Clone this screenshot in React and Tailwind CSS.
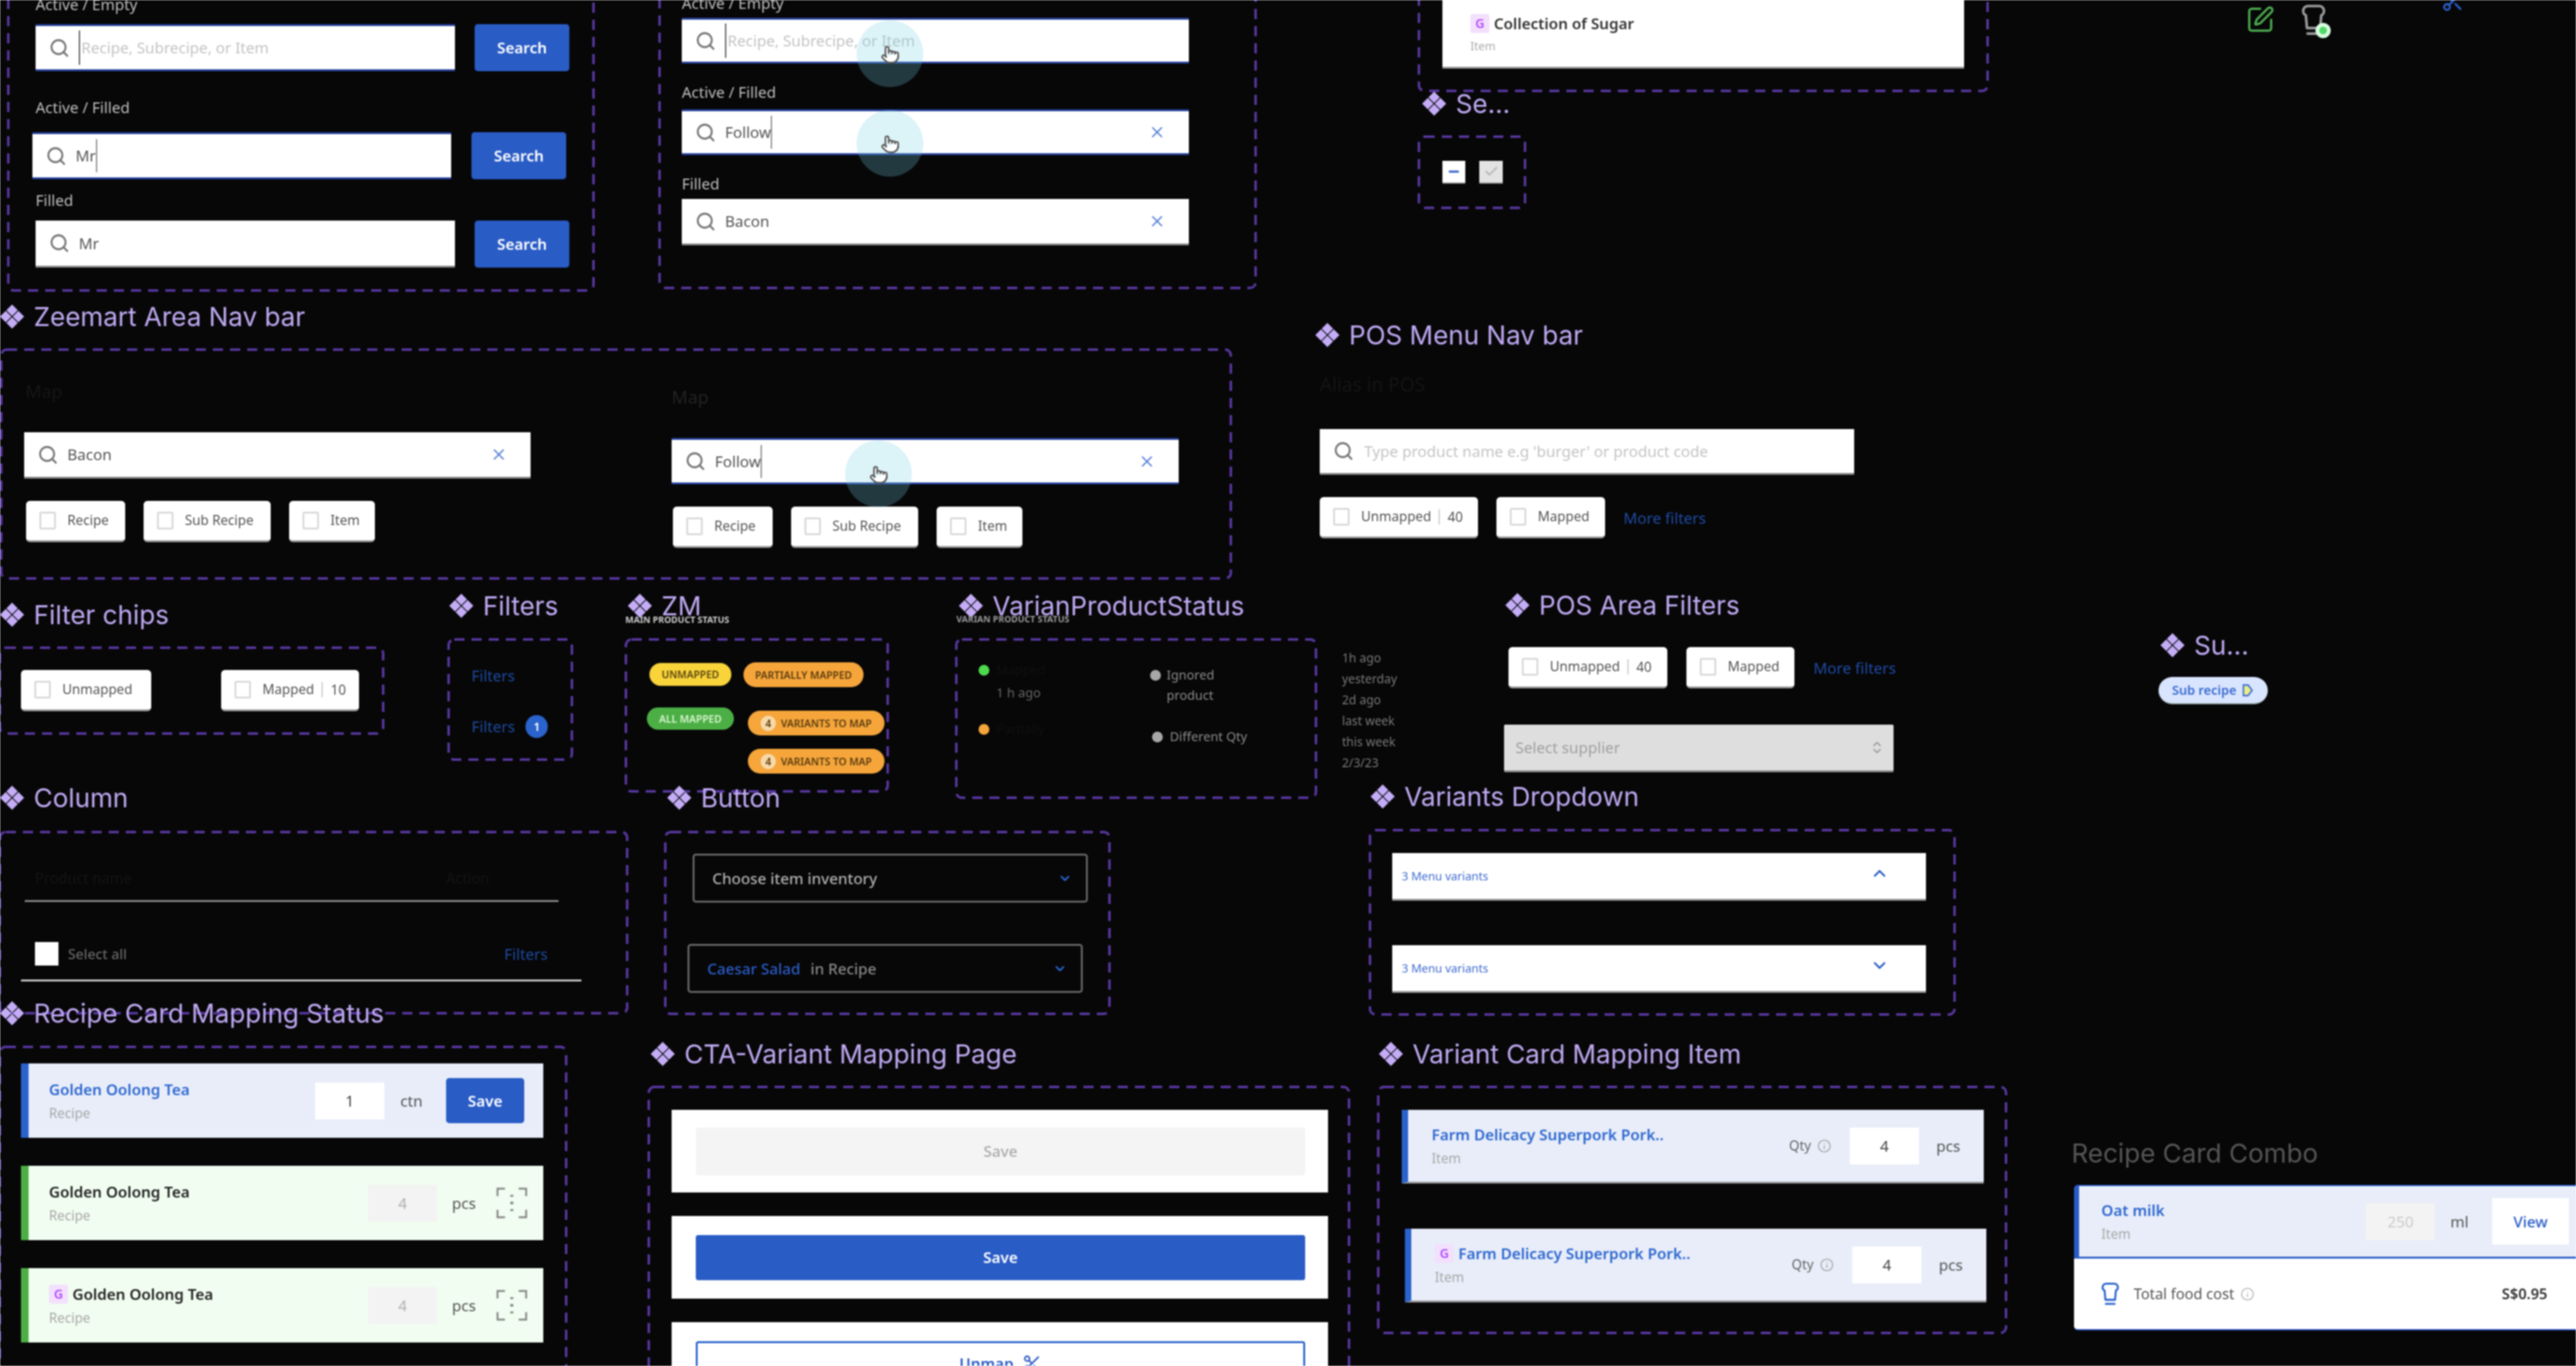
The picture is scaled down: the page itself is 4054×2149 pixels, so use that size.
import { Search, X, ChevronUp, ChevronDown, ChevronsUpDown, Info, Scissors, Pointer, SquarePen, Check, Minus } from 'lucide-react'

function Diamond() {
  return (
    <svg viewBox="0 0 40 40" className="w-[40px] h-[40px] shrink-0 fill-[#c4adf6]">
      <path d="M20 1l9 9-9 9-9-9zM10 11l9 9-9 9-9-9zM30 11l9 9-9 9-9-9zM20 21l9 9-9 9-9-9z" />
    </svg>
  )
}

function Heading({ className, children }) {
  return (
    <div className={`absolute flex items-center gap-[14px] h-[40px] text-[41px] leading-[40px] text-[#bfa9f2] font-['Inter',sans-serif] whitespace-nowrap ${className}`}>
      <Diamond />
      <span>{children}</span>
    </div>
  )
}

// dashed component-set outline, same dash rhythm as the canvas tool draws it
function Frame({ className, children }) {
  return (
    <div className={`absolute ${className}`}>
      <svg className="absolute inset-0 w-full h-full overflow-visible pointer-events-none">
        <rect width="100%" height="100%" rx="9" fill="none" stroke="#56369c" strokeWidth="4" strokeDasharray="16 11" />
      </svg>
      {children}
    </div>
  )
}

function Hat({ className }) {
  return (
    <svg viewBox="0 0 24 30" className={`fill-none stroke-current ${className}`} strokeWidth="2.4" strokeLinejoin="round" strokeLinecap="round">
      <path d="M7 2h10a4.5 4.5 0 0 1 2 8.5L18 22H6L5 10.5A4.5 4.5 0 0 1 7 2zM6.5 27h11" />
    </svg>
  )
}

function Label({ className = '', children }) {
  return <div className={`h-[30px] leading-[30px] text-[24px] text-[#bdbdbd] ${className}`}>{children}</div>
}

function SearchBox({ className = '', active, value, placeholder, caret, clear }) {
  return (
    <div className={`flex items-center bg-white pl-[21px] ${active ? 'border-y-[3px] border-[#28429f]' : 'border-b-[3px] border-[#8a8a8a]'} ${className}`}>
      <Search className="w-[33px] h-[33px] text-[#777] shrink-0" strokeWidth={2.2} />
      {caret && !value && <div className="w-[2px] h-[54px] ml-[14px] mr-[2px] bg-[#555]" />}
      {placeholder && <span className={`text-[24px] text-[#c4c4c4] whitespace-nowrap ${caret ? '' : 'ml-[16px]'}`}>{placeholder}</span>}
      {value && <span className="text-[24px] text-[#555] ml-[14px] whitespace-nowrap">{value}</span>}
      {caret && value && <div className="w-[2px] h-[52px] bg-[#888]" />}
      {clear && <X className="ml-auto mr-[36px] w-[28px] h-[28px] text-[#5b83d8] shrink-0" strokeWidth={2} />}
    </div>
  )
}

function SearchBtn({ className = '' }) {
  return <div className={`flex items-center justify-center w-[149px] h-[74px] rounded-[5px] bg-[#2a5cc6] text-white text-[24px] font-semibold ${className}`}>Search</div>
}

function Cursor({ className }) {
  return (
    <div className={`absolute flex justify-center w-[105px] h-[105px] rounded-full bg-[#74d0e4]/25 ${className}`}>
      <Pointer className="mt-[38px] w-[30px] h-[32px] text-[#555] fill-white" strokeWidth={2} />
    </div>
  )
}

function Chip({ className = '', label, count }) {
  return (
    <div className={`flex items-center pl-[21px] h-[65px] bg-white rounded-[6px] border-b-[3px] border-[#999] text-[21px] text-[#555] whitespace-nowrap ${className}`}>
      <div className="w-[26px] h-[28px] mr-[18px] border-[3px] border-[#dadada] rounded-[3px] shrink-0" />
      <span>{label}</span>
      {count && <span className="ml-[12px] pl-[12px] border-l-2 border-[#ccc] leading-[24px]">{count}</span>}
    </div>
  )
}

function G() {
  return <div className="flex items-center justify-center w-[30px] h-[30px] shrink-0 rounded-[4px] bg-[#f3e0fd] text-[#b44dff] text-[20px] font-semibold">G</div>
}

function StatusPill({ className, children }) {
  return <div className={`flex items-center justify-center rounded-full text-[16px] font-semibold whitespace-nowrap ${className}`}>{children}</div>
}

function VariantsPill({ className = '' }) {
  return (
    <StatusPill className={`w-[215px] h-[39px] bg-[#f5a53a] text-[#5b3d10] ${className}`}>
      <span className="flex items-center justify-center w-[24px] h-[24px] mr-[8px] rounded-full bg-[#f7d9a8] text-[16px]">4</span>
      VARIANTS TO MAP
    </StatusPill>
  )
}

function Dot({ className }) {
  return <div className={`w-[17px] h-[17px] rounded-full shrink-0 ${className}`} />
}

function ScanIcon() {
  return (
    <svg viewBox="0 0 50 50" className="w-[49px] h-[49px] fill-none stroke-[#888]" strokeWidth="3">
      <path d="M2 14V2h12M36 2h12v12M48 36v12H36M14 48H2V36" />
      <path d="M25 12v3M25 23v4M25 35v3" strokeWidth="5" />
    </svg>
  )
}

function Title({ color, g, children }) {
  return (
    <div className="flex items-center gap-[7px] h-[30px]">
      {g && <G />}
      <span className={`text-[24px] font-semibold whitespace-nowrap ${color}`}>{children}</span>
    </div>
  )
}

function Sub({ children }) {
  return <div className="mt-[8px] h-[28px] leading-[28px] text-[21px] text-[#a8a8a8]">{children}</div>
}

function RecipeCard({ tone, title, g, children }) {
  const blue = tone === 'blue'
  return (
    <div className={`flex items-center w-[822px] h-[117px] pl-[32px] border-l-[12px] ${blue ? 'bg-[#e8edf9] border-[#2a63cc]' : 'bg-[#f1fdf0] border-[#4caf45]'}`}>
      <div className="mr-auto">
        <Title g={g} color={blue ? 'text-[#2f68d0]' : 'text-[#222]'}>{title}</Title>
        <Sub>Recipe</Sub>
      </div>
      {children}
    </div>
  )
}

function QtyBox({ value, muted, className = '' }) {
  return (
    <div className={`flex items-center justify-center w-[109px] h-[58px] text-[24px] ${muted ? 'bg-[#f3f3f3] text-[#b0b0b0]' : 'bg-white text-[#444]'} ${className}`}>{value}</div>
  )
}

function MappedRight() {
  return (
    <div className="flex items-center pr-[25px]">
      <QtyBox value="4" muted />
      <span className="ml-[23px] mr-[32px] text-[24px] text-[#555]">pcs</span>
      <ScanIcon />
    </div>
  )
}

function VariantCard({ className, g }) {
  return (
    <div className={`flex items-center h-[116px] pl-[37px] pr-[37px] bg-[#e8edf9] border-l-[10px] border-[#2a63cc] border-b-[3px] border-b-[#999] ${className}`}>
      <div className="mr-auto">
        <Title g={g} color="text-[#2f68d0]">Farm Delicacy Superpork Pork..</Title>
        <Sub>Item</Sub>
      </div>
      <span className="text-[21px] text-[#666]">Qty</span>
      <Info className="ml-[10px] mr-[29px] w-[22px] h-[22px] text-[#aaa]" />
      <QtyBox value="4" />
      <span className="ml-[27px] text-[24px] text-[#555]">pcs</span>
    </div>
  )
}

function MenuVariants({ className = '', up }) {
  const Icon = up ? ChevronUp : ChevronDown
  return (
    <div className={`flex items-center justify-between w-[840px] h-[75px] pl-[15px] pr-[58px] bg-white border-b-[3px] border-[#999] text-[18px] text-[#3f6bd0] ${className}`}>
      <span>3 Menu variants</span>
      <Icon className="w-[30px] h-[30px] text-[#2f5fc8] mb-[8px]" strokeWidth={2.5} />
    </div>
  )
}

function SelectBox({ className, children }) {
  return (
    <div className={`flex items-center w-[622px] h-[77px] pl-[28px] pr-[22px] border-[3px] border-[#666] rounded-[5px] text-[24px] font-medium ${className}`}>
      {children}
      <ChevronDown className="ml-auto w-[22px] h-[22px] text-[#2563cc]" strokeWidth={3} />
    </div>
  )
}

function CtaCard({ children }) {
  return <div className="flex items-center justify-center w-[1033px] h-[130px] pl-[38px] pr-[36px] bg-white shrink-0">{children}</div>
}

export default function App() {
  return (
    <div className="relative w-[4054px] h-[2149px] overflow-hidden bg-[#070708] blur-[1px] font-['Noto_Sans',sans-serif]">
      {/* top row, search states */}
      <Frame className="left-[13px] top-[-60px] w-[921px] h-[517px] pl-[43px] pt-[52px]">
        <Label>Active / Empty</Label>
        <div className="flex gap-[31px] mt-[16px]">
          <SearchBox active caret placeholder="Recipe, Subrecipe, or Item" className="w-[660px] h-[74px]" />
          <SearchBtn />
        </div>
        <Label className="mt-[42px]">Active / Filled</Label>
        <div className="flex gap-[32px] mt-[24px] ml-[-5px]">
          <SearchBox active caret value="Mr" className="w-[659px] h-[74px]" />
          <SearchBtn />
        </div>
        <Label className="mt-[18px]">Filled</Label>
        <div className="flex gap-[31px] mt-[17px]">
          <SearchBox value="Mr" className="w-[660px] h-[74px]" />
          <SearchBtn />
        </div>
      </Frame>

      <Frame className="left-[1038px] top-[-60px] w-[938px] h-[513px] pl-[35px] pt-[50px]">
        <Label>Active / Empty</Label>
        <SearchBox active caret placeholder="Recipe, Subrecipe, or Item" className="w-[798px] h-[72px] mt-[8px]" />
        <Label className="mt-[30px]">Active / Filled</Label>
        <SearchBox active caret clear value="Follow" className="w-[798px] h-[72px] mt-[12px]" />
        <Label className="mt-[30px]">Filled</Label>
        <SearchBox clear value="Bacon" className="w-[798px] h-[73px] mt-[9px]" />
        <Cursor className="left-[310px] top-[92px]" />
        <Cursor className="left-[310px] top-[233px]" />
      </Frame>

      <Frame className="left-[2233px] top-[-60px] w-[895px] h-[203px] pl-[37px] pt-[50px]">
        <div className="w-[821px] h-[118px] pl-[44px] pt-[32px] bg-white border-b-[3px] border-[#999]">
          <Title g color="text-[#333]">Collection of Sugar</Title>
          <div className="mt-[8px] text-[18px] leading-[24px] text-[#aaa]">Item</div>
        </div>
      </Frame>
      <Heading className="left-[2237px] top-[143px]">Se...</Heading>
      <Frame className="left-[2233px] top-[215px] w-[167px] h-[112px] flex items-center gap-[22px] pl-[37px]">
        <div className="flex items-center justify-center w-[36px] h-[36px] bg-white border-b-2 border-[#999]">
          <Minus className="w-[22px] h-[22px] text-[#3f6bd0]" strokeWidth={4} />
        </div>
        <div className="flex items-center justify-center w-[37px] h-[36px] bg-[#e3e3e3] border-b-2 border-[#999]">
          <Check className="w-[24px] h-[24px] text-[#bbb]" strokeWidth={3} />
        </div>
      </Frame>

      {/* loose icons up in the corner */}
      <SquarePen className="absolute left-[3534px] top-[8px] w-[46px] h-[46px] text-[#4caf50]" strokeWidth={1.8} />
      <div className="absolute left-[3620px] top-[6px] w-[50px] h-[54px]">
        <Hat className="w-[42px] h-[52px] text-[#999]" />
        <div className="absolute right-[2px] bottom-[0px] w-[24px] h-[24px] rounded-full bg-[#4dd964] border-[6px] border-[#d8fbe0]" />
      </div>
      <Scissors className="absolute left-[3842px] top-[-16px] w-[36px] h-[36px] text-[#2a5cc6]" strokeWidth={2.2} />

      {/* Zeemart nav */}
      <Heading className="left-[-1px] top-[478px]">Zeemart Area Nav bar</Heading>
      <Frame className="left-[2px] top-[550px] w-[1935px] h-[360px] flex pl-[36px]">
        <div className="w-[1019px] pt-[50px]">
          <div className="h-[30px] leading-[30px] text-[28px] text-[#161616] ml-[2px]">Map</div>
          <SearchBox clear value="Bacon" className="w-[797px] h-[73px] mt-[50px]" />
          <div className="flex gap-[29px] mt-[35px] ml-[3px]">
            <Chip label="Recipe" className="w-[156px]" />
            <Chip label="Sub Recipe" className="w-[200px]" />
            <Chip label="Item" className="w-[135px]" />
          </div>
        </div>
        <div className="w-[816px] pt-[59px]">
          <div className="h-[30px] leading-[30px] text-[28px] text-[#222]">Map</div>
          <SearchBox active caret clear value="Follow" className="w-[798px] h-[73px] mt-[50px]" />
          <div className="flex gap-[29px] mt-[35px] ml-[2px]">
            <Chip label="Recipe" className="w-[157px]" />
            <Chip label="Sub Recipe" className="w-[200px]" />
            <Chip label="Item" className="w-[135px]" />
          </div>
        </div>
        <Cursor className="left-[1328px] top-[143px]" />
      </Frame>

      {/* POS nav, no frame around this one */}
      <Heading className="left-[2069px] top-[507px]">POS Menu Nav bar</Heading>
      <div className="absolute left-[2077px] top-[590px] w-[841px]">
        <div className="h-[30px] leading-[30px] text-[30px] text-[#141414]">Alias in POS</div>
        <SearchBox placeholder="Type product name e.g 'burger' or product code" className="w-[841px] h-[72px] mt-[55px]" />
        <div className="flex items-center gap-[29px] mt-[35px]">
          <Chip label="Unmapped" count="40" className="w-[249px]" />
          <Chip label="Mapped" className="w-[171px]" />
          <span className="text-[24px] text-[#1e4aa3]">More filters</span>
        </div>
      </div>

      {/* filter row */}
      <Heading className="left-[-1px] top-[947px]">Filter chips</Heading>
      <Frame className="left-[0px] top-[1019px] w-[603px] h-[135px] flex items-center gap-[110px] pl-[33px]">
        <Chip label="Unmapped" className="w-[205px]" />
        <Chip label="Mapped" count="10" className="w-[217px]" />
      </Frame>

      <Heading className="left-[706px] top-[933px]">Filters</Heading>
      <Frame className="left-[706px] top-[1006px] w-[194px] h-[189px] pl-[36px] pt-[42px] text-[24px] leading-[30px] text-[#1c4a9e]">
        <div>Filters</div>
        <div className="flex items-center gap-[17px] mt-[47px]">
          Filters
          <span className="flex items-center justify-center w-[35px] h-[36px] rounded-full bg-[#2a63cc] text-white text-[18px] font-semibold">1</span>
        </div>
      </Frame>

      <Heading className="left-[987px] top-[933px]">ZM</Heading>
      <div className="absolute left-[984px] top-[966px] text-[14px] leading-[18px] font-bold text-[#ccc] whitespace-nowrap">MAIN PRODUCT STATUS</div>
      <Frame className="left-[985px] top-[1006px] w-[412px] h-[239px] flex gap-[15px] pl-[33px]">
        <div className="flex flex-col items-center w-[137px] pt-[37px]">
          <StatusPill className="w-[129px] h-[36px] bg-[#f8d33a] text-[#5a4710]">UNMAPPED</StatusPill>
          <StatusPill className="w-[137px] h-[35px] mt-[34px] bg-[#4caf45] text-[#d9f5d2]">ALL MAPPED</StatusPill>
        </div>
        <div className="pt-[36px]">
          <StatusPill className="w-[189px] h-[39px] bg-[#f5a53a] text-[#5b3d10]">PARTIALLY MAPPED</StatusPill>
          <VariantsPill className="mt-[37px] ml-[7px]" />
          <VariantsPill className="mt-[21px] ml-[7px]" />
        </div>
      </Frame>

      <Heading className="left-[1508px] top-[933px]">VarianProductStatus</Heading>
      <div className="absolute left-[1505px] top-[965px] text-[14px] leading-[18px] font-bold text-[#999] whitespace-nowrap">VARIAN PRODUCT STATUS</div>
      <Frame className="left-[1505px] top-[1006px] w-[566px] h-[249px] flex pl-[35px] text-[20px] leading-[24px]">
        <div className="w-[270px] pt-[36px]">
          <div className="flex items-center gap-[11px] text-[#101010]"><Dot className="bg-[#4ddb4d]" />Mapped</div>
          <div className="mt-[12px] ml-[28px] text-[#666]">1 h ago</div>
          <div className="flex items-center gap-[11px] mt-[33px] text-[#101010]"><Dot className="bg-[#f5a53a]" />Partially</div>
        </div>
        <div className="pt-[40px] text-[#8a8a8a] leading-[32px]">
          <div className="flex items-start gap-[9px]">
            <Dot className="bg-[#a8a8a8] mt-[8px]" />
            <span>Ignored<br />product</span>
          </div>
          <div className="flex items-center gap-[11px] mt-[33px] ml-[3px]"><Dot className="bg-[#a8a8a8]" />Different Qty</div>
        </div>
      </Frame>

      <div className="absolute left-[2112px] top-[1019px] text-[19px] leading-[33px] text-[#777]">
        <div>1h ago</div>
        <div>yesterday</div>
        <div>2d ago</div>
        <div>last week</div>
        <div>this week</div>
        <div>2/3/23</div>
      </div>

      <Heading className="left-[2368px] top-[932px]">POS Area Filters</Heading>
      <div className="absolute left-[2367px] top-[1018px] w-[640px]">
        <div className="flex items-center gap-[30px] ml-[7px]">
          <Chip label="Unmapped" count="40" className="w-[250px]" />
          <Chip label="Mapped" className="w-[170px]" />
          <span className="text-[24px] text-[#1e4aa3] whitespace-nowrap">More filters</span>
        </div>
        <div className="flex items-center justify-between w-[613px] h-[75px] mt-[57px] pl-[18px] pr-[14px] bg-[#dedede] border-b-[3px] border-[#888] rounded-[2px] text-[24px] text-[#a0a0a0]">
          Select supplier
          <ChevronsUpDown className="w-[24px] h-[24px] text-[#999]" strokeWidth={2} />
        </div>
      </div>

      <Heading className="left-[3399px] top-[995px]">Su...</Heading>
      <div className="absolute left-[3397px] top-[1065px] flex items-center justify-center gap-[6px] w-[172px] h-[43px] rounded-full bg-[#d9e5ff] border-b-2 border-[#9aa] text-[20px] font-semibold text-[#3b6bd0]">
        Sub recipe
        <svg viewBox="0 0 24 24" className="w-[22px] h-[22px] fill-[#e8ec8c] stroke-[#3b6bd0]" strokeWidth="2.5">
          <path d="M5 3h8l7 9-7 9H5z" />
        </svg>
      </div>

      {/* third row */}
      <Heading className="left-[-1px] top-[1235px]">Column</Heading>
      <Frame className="left-[0px] top-[1309px] w-[987px] h-[285px] pl-[39px] pt-[57px]">
        <div className="flex justify-between w-[715px] ml-[16px] h-[30px] leading-[30px] text-[23px] text-[#141414]">
          <span>Product name</span>
          <span>Action</span>
        </div>
        <div className="w-[840px] h-[3px] mt-[20px] bg-[#888]" />
        <div className="flex items-center justify-between w-[807px] h-[37px] mt-[63px] ml-[16px]">
          <div className="flex items-center gap-[15px] text-[22px] font-medium text-[#666]">
            <div className="w-[37px] h-[37px] bg-white" />
            Select all
          </div>
          <span className="text-[24px] text-[#1c4a9e]">Filters</span>
        </div>
        <div className="w-[882px] h-[3px] mt-[22px] ml-[-6px] bg-[#ccc]" />
      </Frame>

      <Heading className="left-[1049px] top-[1235px]">Button</Heading>
      <Frame className="left-[1047px] top-[1309px] w-[699px] h-[286px] pt-[34px]">
        <SelectBox className="ml-[43px] text-[#b0b0b0]">Choose item inventory</SelectBox>
        <SelectBox className="ml-[35px] mt-[65px] text-[#888]">
          <span className="text-[#2a5cc6]">Caesar Salad</span>
          <span className="ml-[16px]">in Recipe</span>
        </SelectBox>
      </Frame>

      <Heading className="left-[2156px] top-[1233px]">Variants Dropdown</Heading>
      <Frame className="left-[2156px] top-[1306px] w-[920px] h-[290px] pl-[35px] pt-[36px]">
        <MenuVariants up />
        <MenuVariants className="mt-[70px]" />
      </Frame>

      {/* bottom row */}
      <Frame className="left-[0px] top-[1647px] w-[891px] h-[620px] flex flex-col gap-[44px] pl-[33px] pt-[26px]">
        <RecipeCard tone="blue" title="Golden Oolong Tea">
          <QtyBox value="1" />
          <span className="ml-[25px] mr-[37px] text-[24px] text-[#555]">ctn</span>
          <div className="flex items-center justify-center w-[123px] h-[71px] mr-[30px] rounded-[5px] bg-[#2a5cc6] text-white text-[24px] font-semibold">Save</div>
        </RecipeCard>
        <RecipeCard tone="green" title="Golden Oolong Tea"><MappedRight /></RecipeCard>
        <RecipeCard tone="green" g title="Golden Oolong Tea"><MappedRight /></RecipeCard>
      </Frame>
      <Heading className="left-[-1px] top-[1574px]">Recipe Card Mapping Status</Heading>

      <Heading className="left-[1023px] top-[1638px]">CTA-Variant Mapping Page</Heading>
      <Frame className="left-[1021px] top-[1710px] w-[1102px] h-[560px] flex flex-col gap-[37px] pl-[36px] pt-[36px]">
        <CtaCard>
          <div className="flex items-center justify-center w-full h-[75px] rounded-[4px] bg-[#f4f4f4] text-[24px] font-medium text-[#aaa]">Save</div>
        </CtaCard>
        <CtaCard>
          <div className="flex items-center justify-center w-full h-[71px] rounded-[4px] bg-[#2a5cc6] text-[24px] font-semibold text-white">Save</div>
        </CtaCard>
        <CtaCard>
          <div className="flex items-center justify-center gap-[14px] w-full h-[71px] rounded-[4px] border-[3px] border-[#2a63cc] text-[24px] font-semibold text-[#2a5cc6]">
            Unmap
            <Scissors className="w-[30px] h-[30px]" strokeWidth={2} />
          </div>
        </CtaCard>
      </Frame>

      <Heading className="left-[2169px] top-[1638px]">Variant Card Mapping Item</Heading>
      <Frame className="left-[2169px] top-[1710px] w-[988px] h-[387px] pt-[36px]">
        <VariantCard className="w-[916px] ml-[37px]" />
        <VariantCard g className="w-[915px] ml-[42px] mt-[71px]" />
      </Frame>

      <div className="absolute left-[3260px] top-[1794px] h-[40px] leading-[40px] text-[41px] text-[#555] font-['Inter',sans-serif] whitespace-nowrap">Recipe Card Combo</div>
      <div className="absolute left-[3264px] top-[1864px] w-[800px]">
        <div className="flex items-center h-[116px] pl-[35px] pr-[21px] bg-[#e8edf9] border-l-[8px] border-t-2 border-b-[3px] border-[#2a5cc6] rounded-tl-[6px]">
          <div className="mr-auto">
            <Title color="text-[#2f68d0]">Oat milk</Title>
            <Sub>Item</Sub>
          </div>
          <QtyBox value="250" muted className="w-[108px] !text-[#ccc]" />
          <span className="ml-[24px] mr-[37px] text-[24px] text-[#555]">ml</span>
          <div className="flex items-center justify-center w-[121px] h-[73px] bg-white text-[24px] font-medium text-[#2a5cc6]">View</div>
        </div>
        <div className="flex items-center h-[113px] pl-[39px] bg-white border-b-2 border-[#2a4fc0] rounded-bl-[6px] text-[23px] text-[#555]">
          <Hat className="w-[36px] h-[38px] mr-[19px] text-[#2a63cc]" />
          Total food cost
          <Info className="ml-[10px] w-[22px] h-[22px] text-[#bbb]" />
          <span className="ml-[389px] font-semibold text-[#333]">S$0.95</span>
        </div>
      </div>
    </div>
  )
}
